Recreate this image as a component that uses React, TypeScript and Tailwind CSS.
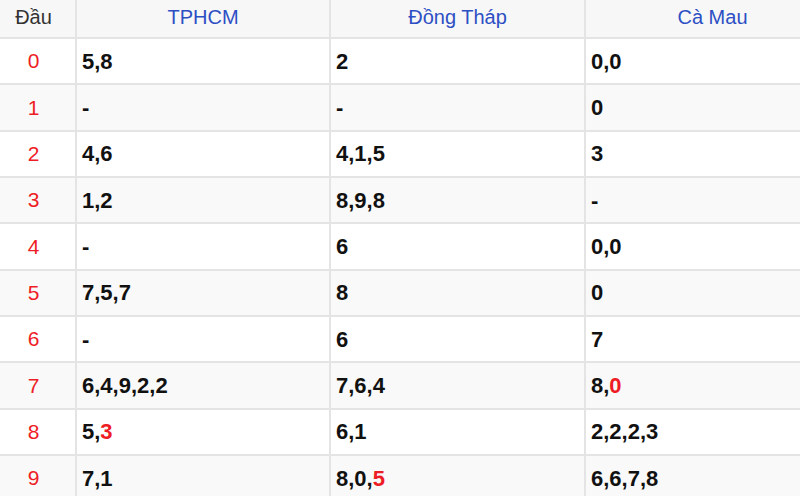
import * as React from "react";

type Cell = { text: string; red?: boolean }[];

const ROWS: { head: string; cols: Cell[] }[] = [
  { head: "0", cols: [[{ text: "5,8" }], [{ text: "2" }], [{ text: "0,0" }]] },
  { head: "1", cols: [[{ text: "-" }], [{ text: "-" }], [{ text: "0" }]] },
  { head: "2", cols: [[{ text: "4,6" }], [{ text: "4,1,5" }], [{ text: "3" }]] },
  { head: "3", cols: [[{ text: "1,2" }], [{ text: "8,9,8" }], [{ text: "-" }]] },
  { head: "4", cols: [[{ text: "-" }], [{ text: "6" }], [{ text: "0,0" }]] },
  { head: "5", cols: [[{ text: "7,5,7" }], [{ text: "8" }], [{ text: "0" }]] },
  { head: "6", cols: [[{ text: "-" }], [{ text: "6" }], [{ text: "7" }]] },
  {
    head: "7",
    cols: [[{ text: "6,4,9,2,2" }], [{ text: "7,6,4" }], [{ text: "8," }, { text: "0", red: true }]],
  },
  {
    head: "8",
    cols: [[{ text: "5," }, { text: "3", red: true }], [{ text: "6,1" }], [{ text: "2,2,2,3" }]],
  },
  {
    head: "9",
    cols: [[{ text: "7,1" }], [{ text: "8,0," }, { text: "5", red: true }], [{ text: "6,6,7,8" }]],
  },
];

const HEADERS = ["TPHCM", "Đồng Tháp", "Cà Mau"];

export default function App() {
  return (
    <div className="w-[800px] h-[496px] overflow-hidden bg-white font-['Liberation_Sans',Arial,sans-serif]">
      <table className="w-[840px] table-fixed border-collapse">
        <colgroup>
          <col className="w-[76px]" />
          <col className="w-[254px]" />
          <col className="w-[255px]" />
          <col className="w-[255px]" />
        </colgroup>
        <thead>
          <tr className="h-[38px] bg-[#f7f7f7]">
            <th className="border-r-2 border-b-2 border-[#e4e4e4] pr-2 pb-[3px] text-center text-[20px] font-normal text-[#333]">
              Đầu
            </th>
            {HEADERS.map((h) => (
              <th
                key={h}
                className="border-x-2 border-b-2 border-[#e4e4e4] pb-[3px] text-center text-[20px] font-normal text-[#2d4fc4]"
              >
                {h}
              </th>
            ))}
          </tr>
        </thead>
        <tbody>
          {ROWS.map((row, i) => (
            <tr key={row.head} className={i % 2 === 1 ? "h-[46.33px] bg-[#f9f9f9]" : "h-[46.33px] bg-white"}>
              <td className="border-r-2 border-b-2 border-[#e4e4e4] pr-2 text-center text-[21px] text-[#ee1c25]">
                {row.head}
              </td>
              {row.cols.map((c, j) => (
                <td
                  key={j}
                  className="border-x-2 border-b-2 border-[#e4e4e4] pl-[5px] text-left text-[22px] font-bold text-[#111]"
                >
                  {c.map((p, k) => (
                    <span key={k} className={p.red ? "text-[#ee1c25]" : ""}>
                      {p.text}
                    </span>
                  ))}
                </td>
              ))}
            </tr>
          ))}
        </tbody>
      </table>
    </div>
  );
}
